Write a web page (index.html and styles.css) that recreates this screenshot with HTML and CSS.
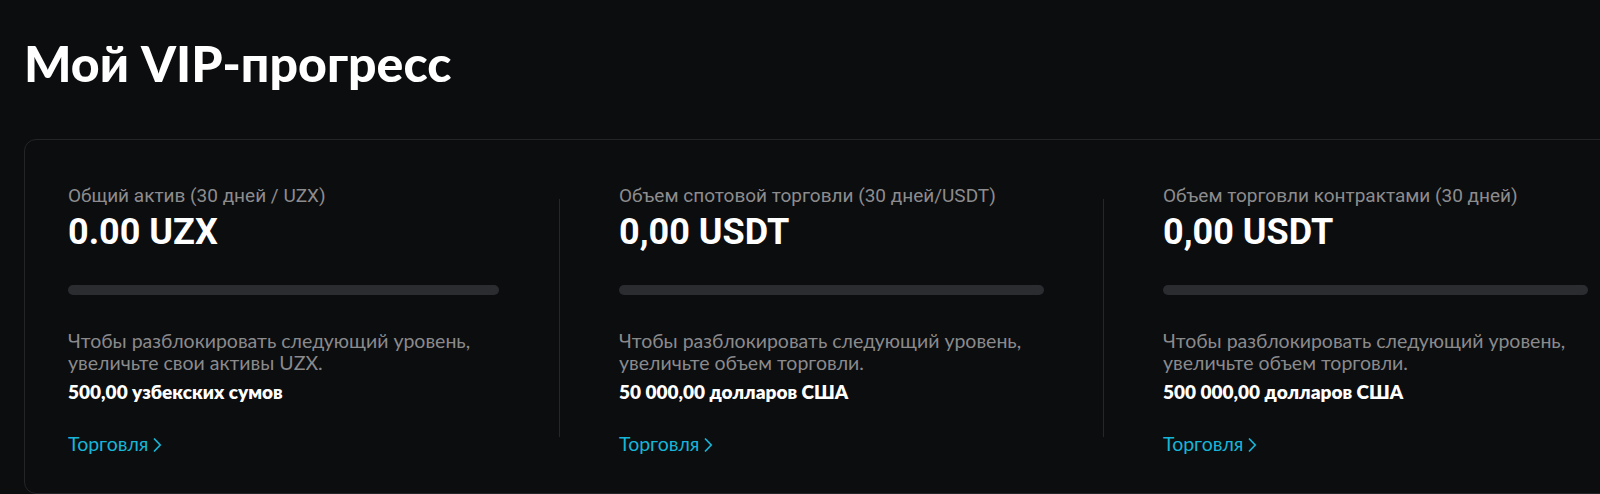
FILE: index.html
```html
<!DOCTYPE html>
<html lang="ru">
<head>
    <meta charset="UTF-8">
    <meta name="viewport" content="width=device-width, initial-scale=1.0">
    <title>Мой VIP-прогресс</title>
    <link rel="stylesheet" href="styles.css">
</head>
<body>
    <main class="page">
        <h1 class="page-title">Мой VIP-прогресс</h1>

        <section class="progress-card">
            <div class="metric metric-assets">
                <p class="metric-label">Общий актив (30 дней / UZX)</p>
                <p class="metric-value">0.00 UZX</p>
                <div class="metric-bar"><div class="metric-bar-fill" style="width: 0%"></div></div>
                <p class="metric-hint">Чтобы разблокировать следующий уровень, увеличьте свои активы UZX.</p>
                <p class="metric-target">500,00 узбекских сумов</p>
                <a class="metric-link" href="#">Торговля
                    <svg class="chevron" width="10" height="16" viewBox="0 0 10 16"><path d="M2 1.5L8.2 8L2 14.5" fill="none" stroke="currentColor" stroke-width="1.7"/></svg>
                </a>
            </div>

            <div class="metric-divider"></div>

            <div class="metric">
                <p class="metric-label">Объем спотовой торговли (30 дней/USDT)</p>
                <p class="metric-value">0,00 USDT</p>
                <div class="metric-bar"><div class="metric-bar-fill" style="width: 0%"></div></div>
                <p class="metric-hint">Чтобы разблокировать следующий уровень, увеличьте объем торговли.</p>
                <p class="metric-target">50 000,00 долларов США</p>
                <a class="metric-link" href="#">Торговля
                    <svg class="chevron" width="10" height="16" viewBox="0 0 10 16"><path d="M2 1.5L8.2 8L2 14.5" fill="none" stroke="currentColor" stroke-width="1.7"/></svg>
                </a>
            </div>

            <div class="metric-divider"></div>

            <div class="metric">
                <p class="metric-label">Объем торговли контрактами (30 дней)</p>
                <p class="metric-value">0,00 USDT</p>
                <div class="metric-bar"><div class="metric-bar-fill" style="width: 0%"></div></div>
                <p class="metric-hint">Чтобы разблокировать следующий уровень, увеличьте объем торговли.</p>
                <p class="metric-target">500 000,00 долларов США</p>
                <a class="metric-link" href="#">Торговля
                    <svg class="chevron" width="10" height="16" viewBox="0 0 10 16"><path d="M2 1.5L8.2 8L2 14.5" fill="none" stroke="currentColor" stroke-width="1.7"/></svg>
                </a>
            </div>
        </section>
    </main>
</body>
</html>
```

FILE: styles.css
```css
/* Base */
* {
    box-sizing: border-box;
    margin: 0;
    padding: 0;
}

body {
    background-color: #0c0d0f;
    color: #fff;
    font-family: Lato, "Noto Sans", sans-serif;
    overflow: hidden;
}

.page {
    padding: 33px 0 0 24px;
}

/* Title */
.page-title {
    font-family: Lato, "Noto Sans", sans-serif;
    font-size: 50px;
    font-weight: 900;
    line-height: 60px;
    color: #fff;
    margin-bottom: 46px;
}

/* Card with three metrics */
.progress-card {
    display: flex;
    align-items: flex-start;
    width: max-content;
    padding: 44px 43px 37px;
    border: 1px solid #242529;
    border-radius: 12px;
}

.metric {
    flex: none;
    width: 425px;
}

.metric-assets {
    width: 431px;
}

.metric-divider {
    flex: none;
    width: 1px;
    height: 238px;
    margin: 15px 59px 0 60px;
    background-color: #26272b;
}

.metric-divider + .metric + .metric-divider {
    margin-left: 59px;
}

.metric-label {
    font-family: Roboto, "Noto Sans", sans-serif;
    font-size: 19px;
    line-height: 24px;
    color: #8c8c8e;
}

.metric-value {
    font-family: Roboto, "Noto Sans", sans-serif;
    font-size: 36px;
    font-weight: 700;
    line-height: 44px;
    margin-top: 2px;
    color: #fff;
}

.metric-bar {
    height: 10px;
    margin-top: 31px;
    border-radius: 5px;
    background-color: #2b2c30;
    overflow: hidden;
}

.metric-bar-fill {
    height: 100%;
    background-color: #12b5d6;
}

.metric-hint {
    font-size: 19.5px;
    line-height: 22px;
    margin-top: 35px;
    color: #8a8a8c;
}

.metric-target {
    font-size: 19px;
    font-weight: 800;
    line-height: 24px;
    margin-top: 6px;
    color: #fff;
}

.metric-link {
    display: inline-flex;
    align-items: center;
    gap: 4px;
    margin-top: 28px;
    font-size: 19.5px;
    line-height: 24px;
    color: #15b6d8;
    text-decoration: none;
}

.chevron {
    display: block;
    margin-top: 1px;
}
```
